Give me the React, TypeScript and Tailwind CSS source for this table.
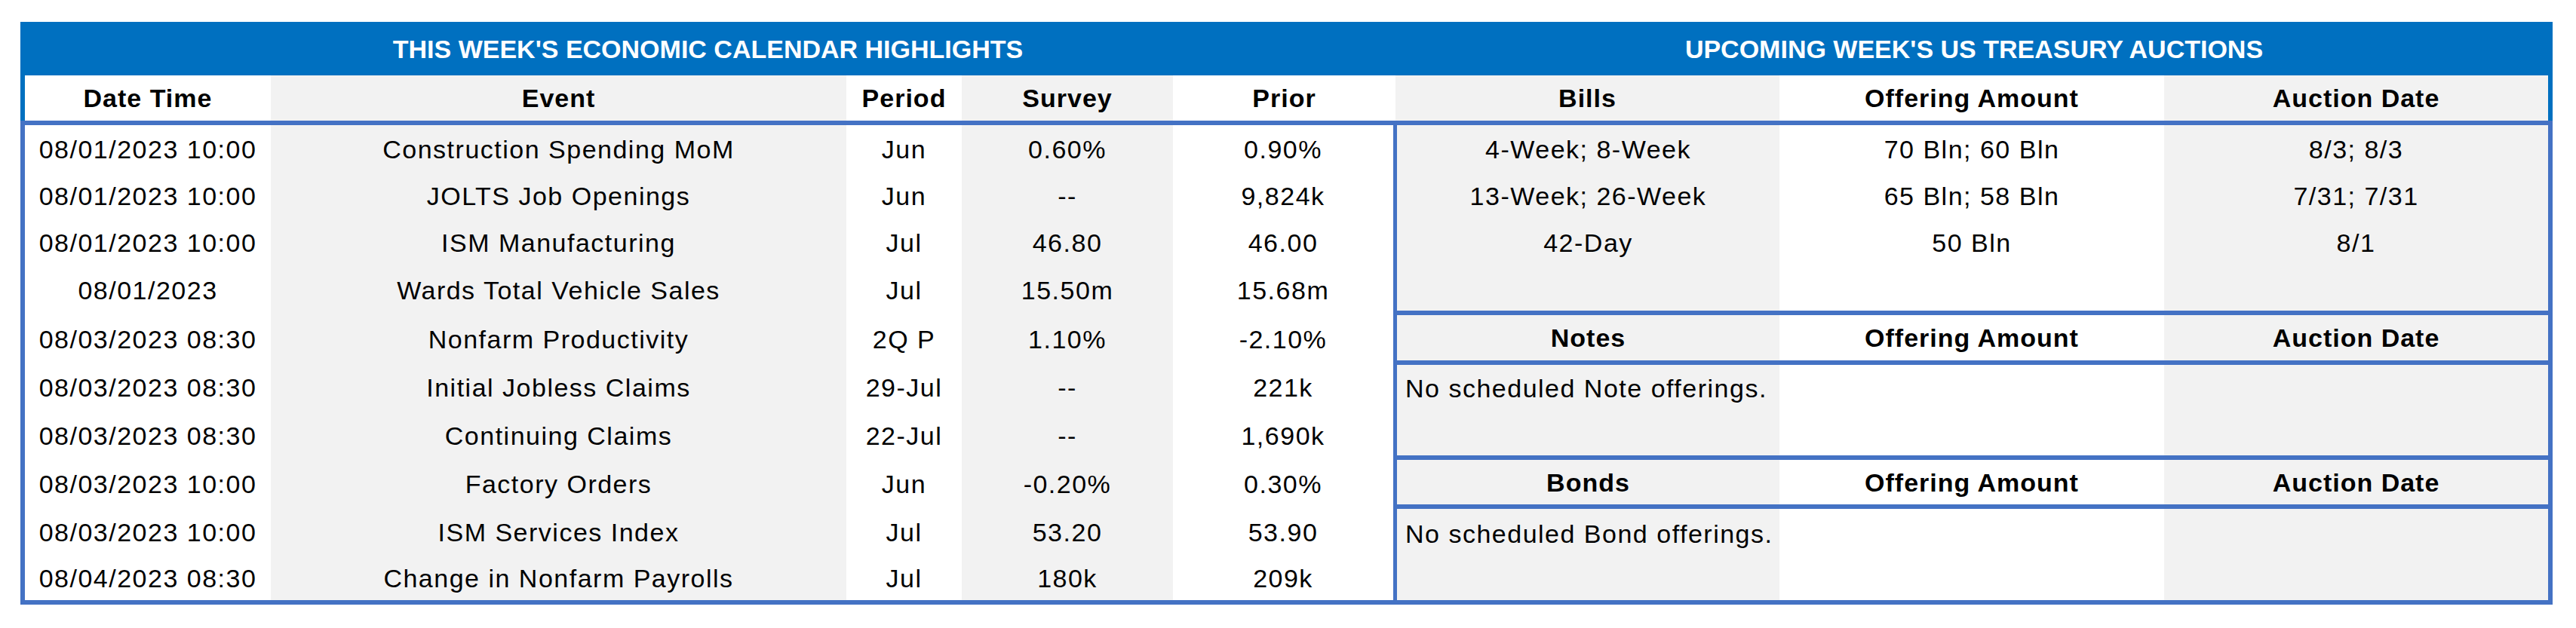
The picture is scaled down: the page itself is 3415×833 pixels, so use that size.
import React from "react";

const events = [
  ["08/01/2023 10:00", "Construction Spending MoM", "Jun", "0.60%", "0.90%"],
  ["08/01/2023 10:00", "JOLTS Job Openings", "Jun", "--", "9,824k"],
  ["08/01/2023 10:00", "ISM Manufacturing", "Jul", "46.80", "46.00"],
  ["08/01/2023", "Wards Total Vehicle Sales", "Jul", "15.50m", "15.68m"],
  ["08/03/2023 08:30", "Nonfarm Productivity", "2Q P", "1.10%", "-2.10%"],
  ["08/03/2023 08:30", "Initial Jobless Claims", "29-Jul", "--", "221k"],
  ["08/03/2023 08:30", "Continuing Claims", "22-Jul", "--", "1,690k"],
  ["08/03/2023 10:00", "Factory Orders", "Jun", "-0.20%", "0.30%"],
  ["08/03/2023 10:00", "ISM Services Index", "Jul", "53.20", "53.90"],
  ["08/04/2023 08:30", "Change in Nonfarm Payrolls", "Jul", "180k", "209k"],
];

// row heights picked so text lines up with the treasury side
const rowH = ["h-[63px]", "h-[62px]", "h-[62px]", "h-[64px]", "h-[65px]", "h-[64px]", "h-[63px]", "h-[65px]", "h-[64px]", "h-[58px]"];

const bills = [
  ["4-Week; 8-Week", "70 Bln; 60 Bln", "8/3; 8/3"],
  ["13-Week; 26-Week", "65 Bln; 58 Bln", "7/31; 7/31"],
  ["42-Day", "50 Bln", "8/1"],
  ["", "", ""],
];
const billH = ["h-[63px]", "h-[62px]", "h-[62px]", "h-[59px]"];

const cell = "flex items-center justify-center whitespace-nowrap";

function Line() {
  return <div className="h-[6px] bg-[#4472C4]" />;
}

function SectionHead({ label, h }: { label: string; h: string }) {
  return (
    <div className={`flex ${h} font-bold tracking-[1px]`}>
      <div className={`${cell} w-[507px] bg-[#F2F2F2]`}>{label}</div>
      <div className={`${cell} w-[510px] bg-white`}>Offering Amount</div>
      <div className={`${cell} flex-1 bg-[#F2F2F2]`}>Auction Date</div>
    </div>
  );
}

function EmptyOffering({ text, first, rest }: { text: string; first: string; rest: string }) {
  return (
    <div className="flex flex-col">
      <div className={`flex ${first}`}>
        <div className="relative z-10 flex w-[507px] items-center whitespace-nowrap bg-[#F2F2F2] pl-[11px]">{text}</div>
        <div className="w-[510px] bg-white" />
        <div className="flex-1 bg-[#F2F2F2]" />
      </div>
      <div className={`flex ${rest}`}>
        <div className="w-[507px] bg-[#F2F2F2]" />
        <div className="w-[510px] bg-white" />
        <div className="flex-1 bg-[#F2F2F2]" />
      </div>
    </div>
  );
}

export default function App() {
  return (
    <div className="h-[833px] w-[3415px] bg-white pl-[27px] pt-[29px] font-['Liberation_Sans',Arial,sans-serif] text-[34px] leading-none text-black">
      <div className="w-[3357px]">
        {/* title band */}
        <div className="flex h-[71px] bg-[#0070C0] font-bold text-white">
          <div className={`${cell} w-[1823px]`}>THIS WEEK'S ECONOMIC CALENDAR HIGHLIGHTS</div>
          <div className={`${cell} flex-1`}>UPCOMING WEEK'S US TREASURY AUCTIONS</div>
        </div>

        {/* column headers */}
        <div className="flex h-[60px] border-x-[6px] border-[#0070C0] font-bold tracking-[1px]">
          <div className={`${cell} w-[326px] bg-white`}>Date Time</div>
          <div className={`${cell} w-[763px] bg-[#F2F2F2]`}>Event</div>
          <div className={`${cell} w-[153px] bg-white`}>Period</div>
          <div className={`${cell} w-[280px] bg-[#F2F2F2]`}>Survey</div>
          <div className={`${cell} w-[295px] bg-white`}>Prior</div>
          <div className={`${cell} w-[509px] bg-[#F2F2F2]`}>Bills</div>
          <div className={`${cell} w-[510px] bg-white`}>Offering Amount</div>
          <div className={`${cell} flex-1 bg-[#F2F2F2]`}>Auction Date</div>
        </div>
        <Line />

        {/* body */}
        <div className="flex border-x-[6px] border-b-[6px] border-[#4472C4] tracking-[1.5px]">
          <div className="flex w-[1814px] flex-col">
            {events.map((r, i) => (
              <div key={i} className={`flex ${rowH[i]}`}>
                <div className={`${cell} w-[326px] bg-white`}>{r[0]}</div>
                <div className={`${cell} w-[763px] bg-[#F2F2F2]`}>{r[1]}</div>
                <div className={`${cell} w-[153px] bg-white`}>{r[2]}</div>
                <div className={`${cell} w-[280px] bg-[#F2F2F2]`}>{r[3]}</div>
                <div className={`${cell} w-[292px] bg-white`}>{r[4]}</div>
              </div>
            ))}
          </div>

          <div className="w-[5px] bg-[#4472C4]" />

          <div className="flex flex-1 flex-col">
            {bills.map((b, i) => (
              <div key={i} className={`flex ${billH[i]}`}>
                <div className={`${cell} w-[507px] bg-[#F2F2F2]`}>{b[0]}</div>
                <div className={`${cell} w-[510px] bg-white`}>{b[1]}</div>
                <div className={`${cell} flex-1 bg-[#F2F2F2]`}>{b[2]}</div>
              </div>
            ))}
            <Line />
            <SectionHead label="Notes" h="h-[60px]" />
            <Line />
            <EmptyOffering text="No scheduled Note offerings." first="h-[62px]" rest="h-[58px]" />
            <Line />
            <SectionHead label="Bonds" h="h-[59px]" />
            <Line />
            <EmptyOffering text="No scheduled Bond offerings." first="h-[66px]" rest="h-[55px]" />
          </div>
        </div>
      </div>
    </div>
  );
}
